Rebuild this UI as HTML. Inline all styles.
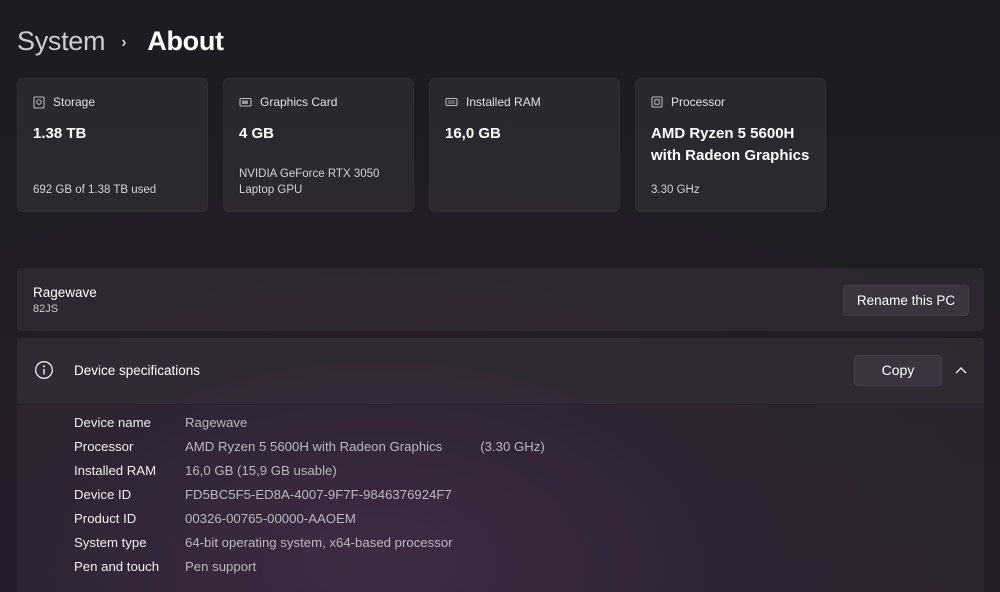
<!DOCTYPE html>
<html><head><meta charset="utf-8"><style>
*{margin:0;padding:0;box-sizing:border-box}
body{width:1000px;height:592px;overflow:hidden;font-family:"Segoe UI","Liberation Sans",sans-serif;color:#fff;
background:radial-gradient(ellipse 700px 400px at 380px 560px,#36233c 0%,rgba(42,28,46,.6) 50%,rgba(32,28,36,0) 100%),linear-gradient(180deg,#1e1b22 0%,#211c25 60%,#241c28 100%);position:relative}
.t{position:absolute;top:26px;left:17px;font-size:27px;font-weight:600;letter-spacing:-.3px}
.t .s{color:#cfcbd2;font-weight:500}
.t .c{font-size:16px;color:#ccc;margin:0 21px 0 16px;position:relative;top:-3px}
.card{position:absolute;top:78px;width:191px;height:134px;background:rgba(255,255,255,.055);border-radius:6px;border:1px solid rgba(255,255,255,.03)}
.card .h{position:absolute;left:15px;top:16px;font-size:12px;color:#e4e0e6;display:flex;align-items:center;gap:8px}
.card .v{position:absolute;left:15px;top:44px;font-size:15px;font-weight:600;line-height:22px}
.card .b{position:absolute;left:15px;bottom:13px;font-size:11.5px;color:#d6d2d8;line-height:16px}
.p{position:absolute;left:17px;width:967px;background:rgba(255,255,255,.05)}
.btn{position:absolute;background:#3a3440;border:1px solid #443e4a;border-radius:4px;font-size:13.5px;color:#fff;text-align:center}
.row{display:flex;font-size:13.2px;height:24px;line-height:24px}
.row .k{width:111px;color:#f0eef2}
.row .d{color:#bcb7c0}
</style></head><body>
<div class="t"><span class="s">System</span><span class="c">›</span>About</div>

<div class="card" style="left:17px"><div class="h"><svg width="12" height="13" viewBox="0 0 12 13"><rect x="1" y="1" width="10" height="11" rx="1" fill="none" stroke="#bbb" stroke-width="1.1"/><circle cx="6" cy="6" r="2.3" fill="none" stroke="#bbb"/></svg>Storage</div><div class="v">1.38 TB</div><div class="b">692 GB of 1.38 TB used</div></div>
<div class="card" style="left:223px"><div class="h"><svg width="13" height="11" viewBox="0 0 13 11"><rect x="1" y="1.5" width="11" height="7.5" rx="1" fill="none" stroke="#bbb" stroke-width="1.1"/><rect x="3" y="3.5" width="6" height="3.5" fill="#999"/></svg>Graphics Card</div><div class="v">4 GB</div><div class="b">NVIDIA GeForce RTX 3050<br>Laptop GPU</div></div>
<div class="card" style="left:429px"><div class="h"><svg width="13" height="10" viewBox="0 0 13 10"><rect x="1" y="1.5" width="11" height="7" rx="1" fill="none" stroke="#bbb" stroke-width="1.1"/><line x1="3" y1="4" x2="10" y2="4" stroke="#999"/><line x1="3" y1="6" x2="10" y2="6" stroke="#999"/></svg>Installed RAM</div><div class="v">16,0 GB</div></div>
<div class="card" style="left:635px"><div class="h"><svg width="12" height="12" viewBox="0 0 12 12"><rect x="1" y="1" width="10" height="10" rx="1" fill="none" stroke="#bbb" stroke-width="1.1"/><rect x="3.8" y="3.8" width="4.4" height="4.4" fill="none" stroke="#bbb"/></svg>Processor</div><div class="v">AMD Ryzen 5 5600H<br>with Radeon Graphics</div><div class="b">3.30 GHz</div></div>

<div class="p" style="top:268px;height:63px;border-radius:4px">
 <div style="position:absolute;left:16px;top:17px;font-size:13.5px">Ragewave</div>
 <div style="position:absolute;left:16px;top:35px;font-size:11px;color:#ccc">82JS</div>
 <div class="btn" style="left:826px;top:17px;width:126px;height:31px;line-height:29px">Rename this PC</div>
</div>

<div class="p" style="top:338px;height:66px;border-radius:4px 4px 0 0;background:rgba(255,255,255,.06)">
 <svg style="position:absolute;left:17px;top:22px" width="20" height="20" viewBox="0 0 20 20"><circle cx="10" cy="10" r="8.3" fill="none" stroke="#eee" stroke-width="1.3"/><line x1="10" y1="9" x2="10" y2="14.5" stroke="#eee" stroke-width="1.4"/><circle cx="10" cy="6.2" r="1" fill="#eee"/></svg>
 <div style="position:absolute;left:57px;top:25px;font-size:13.5px">Device specifications</div>
 <div class="btn" style="left:837px;top:17px;width:88px;height:31px;line-height:29px;font-size:14px">Copy</div>
 <svg style="position:absolute;left:938px;top:28px" width="12" height="8" viewBox="0 0 12 8"><path d="M1 7 L6 2 L11 7" fill="none" stroke="#eee" stroke-width="1.4"/></svg>
</div>
<div class="p" style="top:405px;height:187px;background:rgba(255,255,255,.04);padding:6px 0 0 57px">
 <div class="row"><span class="k">Device name</span><span class="d">Ragewave</span></div>
 <div class="row"><span class="k">Processor</span><span class="d">AMD Ryzen 5 5600H with Radeon Graphics<span style="margin-left:38px">(3.30 GHz)</span></span></div>
 <div class="row"><span class="k">Installed RAM</span><span class="d">16,0 GB (15,9 GB usable)</span></div>
 <div class="row"><span class="k">Device ID</span><span class="d">FD5BC5F5-ED8A-4007-9F7F-9846376924F7</span></div>
 <div class="row"><span class="k">Product ID</span><span class="d">00326-00765-00000-AAOEM</span></div>
 <div class="row"><span class="k">System type</span><span class="d">64-bit operating system, x64-based processor</span></div>
 <div class="row"><span class="k">Pen and touch</span><span class="d">Pen support</span></div>
</div>
</body></html>
